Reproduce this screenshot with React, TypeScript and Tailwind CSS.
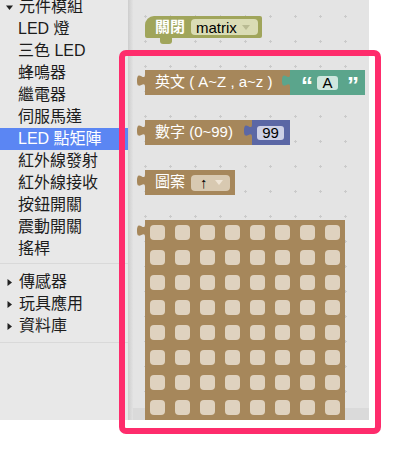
import React from "react";

const BROWN = "#a6875b";

// Blockly style puzzle tab on the left edge of a value block
function Tab({ color, className = "" }: { color: string; className?: string }) {
  return (
    <svg width="8" height="20" viewBox="0 0 8 20" className={"shrink-0 overflow-visible " + className}>
      <path d="M8 0 V4 C8 13 0 -2 0 11 C0 22 8 9 8 17 V20 Z" fill={color} />
    </svg>
  );
}

function Caret({ open }: { open?: boolean }) {
  return (
    <svg width="7" height="7" viewBox="0 0 7 7" className="shrink-0">
      {open ? <path d="M0 1.5 H7 L3.5 6 Z" fill="#222" /> : <path d="M1.5 0 V7 L6 3.5 Z" fill="#222" />}
    </svg>
  );
}

const modules = ["LED 燈", "三色 LED", "蜂鳴器", "繼電器", "伺服馬達", "LED 點矩陣", "紅外線發射", "紅外線接收", "按鈕開關", "震動開關", "搖桿"];
const groups = ["傳感器", "玩具應用", "資料庫"];

function Toolbox() {
  return (
    <div className="w-[128px] shrink-0 bg-[#e8e8e8] text-[16px] leading-[22px] text-[#1c1c1c] overflow-hidden">
      <div className="-mt-[4px]">
        <div className="flex items-center h-[22px] pl-[6px] gap-[6px]">
          <Caret open />
          <span>元件模組</span>
        </div>
        {modules.map((m) => (
          <div
            key={m}
            className={
              "h-[22px] pl-[18px] whitespace-nowrap " +
              (m === "LED 點矩陣" ? "bg-[#5b86f3] text-white" : "")
            }
          >
            {m}
          </div>
        ))}
        <div className="h-[11px] pt-[3px]">
          <div className="h-px bg-[#d9d9d9]" />
        </div>
        {groups.map((g) => (
          <div key={g} className="flex items-center h-[22px] pl-[6px] gap-[6px]">
            <Caret />
            <span>{g}</span>
          </div>
        ))}
        <div className="h-[11px] pt-[5px]">
          <div className="h-px bg-[#d9d9d9]" />
        </div>
      </div>
    </div>
  );
}

function Workspace() {
  return (
    <div className="relative flex-1 bg-[#e4e4e4] bg-[radial-gradient(circle,#cacaca_1px,transparent_1.3px)] bg-[length:25px_25px] bg-[position:0px_4px] overflow-hidden">
      {/* horizontal scrollbar */}
      <div className="absolute left-0 right-0 bottom-0 h-[12px] bg-[#dadada]" />

      <div className="relative flex flex-col items-start pl-[4px] pt-[16px] text-[15px] text-white">
        {/* 關閉 matrix */}
        <div className="ml-[8px] flex flex-col items-start">
          <div className="w-[117px] h-[22px] bg-[#a0a55b] rounded-tl-[9px] rounded-[2px] flex items-center pl-[10px] gap-[6px] font-bold">
            <span>關閉</span>
            <div className="h-[16px] w-[67px] rounded-[4px] bg-[#dadcb5] flex items-center pl-[5px] gap-[5px] text-[15px] font-normal text-black">
              <span className="leading-none">matrix</span>
              <svg width="8" height="5" viewBox="0 0 8 5">
                <path d="M0 0 H8 L4 5 Z" fill="#b9bb93" />
              </svg>
            </div>
          </div>
          <div className="ml-[15px] w-[12px] h-[6px] rounded-b-[3px] bg-[#a0a55b]" />
        </div>

        {/* 英文 */}
        <div className="mt-[26px] flex items-start">
          <Tab color={BROWN} />
          <div className="w-[145px] h-[25px] bg-[#a6875b] flex items-center pl-[10px] whitespace-nowrap">
            英文 ( A~Z , a~z )
          </div>
          <Tab color="#5ba58c" className="-ml-[8px]" />
          <div className="w-[75px] h-[25px] bg-[#5ba58c] flex items-center pl-[11px] gap-[4px]">
            <span className="self-start mt-[4px] text-[24px] font-bold leading-none">“</span>
            <div className="w-[21px] h-[14px] rounded-[3px] bg-[#cfe6de] text-black flex items-center justify-center leading-none">
              A
            </div>
            <span className="self-start mt-[4px] ml-[5px] text-[24px] font-bold leading-none">”</span>
          </div>
        </div>

        {/* 數字 */}
        <div className="mt-[25px] flex items-start">
          <Tab color={BROWN} />
          <div className="w-[107px] h-[25px] bg-[#a6875b] flex items-center pl-[10px] whitespace-nowrap">
            數字 (0~99)
          </div>
          <Tab color="#5b67a5" className="-ml-[8px]" />
          <div className="w-[38px] h-[25px] bg-[#5b67a5] flex items-center pl-[5px]">
            <div className="w-[27px] h-[14px] rounded-[3px] bg-[#cdd0e6] text-black flex items-center justify-center leading-none">
              99
            </div>
          </div>
        </div>

        {/* 圖案 */}
        <div className="mt-[25px] flex items-start">
          <Tab color={BROWN} />
          <div className="w-[90px] h-[25px] bg-[#a6875b] flex items-center pl-[10px] gap-[6px] whitespace-nowrap">
            <span>圖案</span>
            <div className="w-[39px] h-[16px] rounded-[4px] bg-[#d8c9b1] flex items-center pl-[9px] gap-[7px] text-black">
              <span className="leading-none text-[15px]">↑</span>
              <svg width="8" height="5" viewBox="0 0 8 5">
                <path d="M0 0 H8 L4 5 Z" fill="#efe5d6" />
              </svg>
            </div>
          </div>
        </div>

        {/* 8x8 matrix */}
        <div className="mt-[25px] flex items-start">
          <Tab color={BROWN} />
          <div className="w-[200px] h-[200px] bg-[#a6875b] p-[5px] grid grid-cols-8 gap-[10px]">
            {Array.from({ length: 64 }).map((_, i) => (
              <div key={i} className="w-[15px] h-[15px] rounded-[4px] bg-[#dfd2bf]" />
            ))}
          </div>
        </div>
      </div>
    </div>
  );
}

export default function App() {
  return (
    <div className="relative w-[402px] h-[455px] bg-white overflow-hidden font-['Liberation_Sans','Noto_Sans_CJK_TC',sans-serif]">
      <div className="flex h-[420px] w-[369px]">
        <Toolbox />
        <div className="w-[5px] shrink-0 bg-gradient-to-r from-[#cdcdcd] to-[#e2e2e2]" />
        <Workspace />
      </div>
      {/* highlight annotation */}
      <div className="absolute left-[119px] top-[50px] w-[262px] h-[384px] border-[6px] border-[#fe2c6c] rounded-[7px]" />
    </div>
  );
}
